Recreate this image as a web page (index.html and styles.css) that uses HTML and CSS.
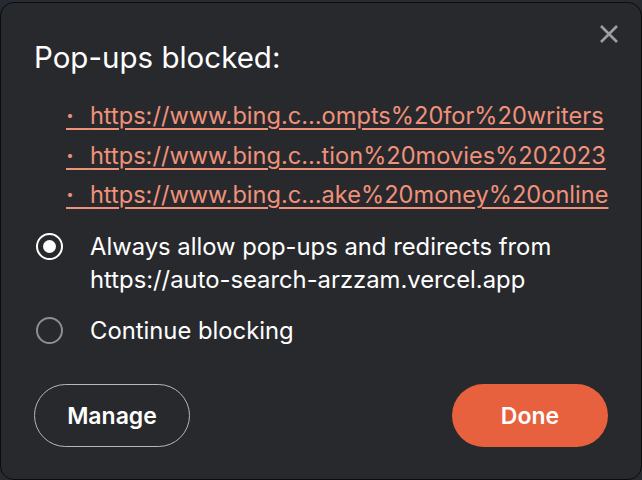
FILE: index.html
```html
<!DOCTYPE html>
<html>
<head>
<meta charset="utf-8">
<link rel="stylesheet" href="styles.css">
</head>
<body>
<div class="dialog">
  <button class="close" aria-label="Close">
    <svg width="20" height="20" viewBox="0 0 20 20"><path d="M2 2 L18 18 M18 2 L2 18" stroke="#9aa0a6" stroke-width="2.6" stroke-linecap="butt"/></svg>
  </button>
  <h1 class="title">Pop-ups blocked:</h1>
  <ul class="links">
    <li><a href="#"><span class="dot">·</span>https://www.bing.c…ompts%20for%20writers</a></li>
    <li><a href="#"><span class="dot">·</span>https://www.bing.c…tion%20movies%202023</a></li>
    <li><a href="#"><span class="dot">·</span>https://www.bing.c…ake%20money%20online</a></li>
  </ul>
  <div class="options">
    <label class="option">
      <span class="radio checked"></span>
      <span class="opt-text">Always allow pop-ups and redirects from https://auto-search-arzzam.vercel.app</span>
    </label>
    <label class="option second">
      <span class="radio"></span>
      <span class="opt-text">Continue blocking</span>
    </label>
  </div>
  <div class="actions">
    <button class="btn outline">Manage</button>
    <button class="btn primary">Done</button>
  </div>
</div>
</body>
</html>
```
FILE: styles.css
```css
html, body {
  margin: 0;
  padding: 0;
  height: 100%;
}
body {
  background: #262a31;
  font-family: Inter, "Noto Sans", "Liberation Sans", sans-serif;
  color: #ffffff;
  padding-top: 2px;
  box-sizing: border-box;
}
.dialog {
  position: relative;
  box-sizing: border-box;
  height: 478px;
  background: #28292d;
  border: 1px solid #0c0c0e;
  border-radius: 14px;
  padding: 38px 33px 32px 33px;
  display: flex;
  flex-direction: column;
}
.close {
  position: absolute;
  top: 21px;
  right: 22px;
  width: 20px;
  height: 20px;
  padding: 0;
  border: 0;
  background: transparent;
  display: flex;
}
.title {
  margin: 0;
  font-size: 29.5px;
  font-weight: 400;
  line-height: 32px;
}
.links {
  list-style: none;
  margin: 23px 0 0 0;
  padding: 0 0 0 32px;
}
.links li {
  height: 39.5px;
  line-height: 39.5px;
  white-space: nowrap;
}
.links a {
  color: #f0917a;
  font-size: 23.6px;
  text-decoration: underline;
  text-decoration-thickness: 1.5px;
  text-underline-offset: 4px;
}
.dot {
  font-weight: 700;
  letter-spacing: 16px;
}
.options {
  margin-top: 15px;
  display: flex;
  flex-direction: column;
  gap: 18px;
}
.option {
  display: flex;
  align-items: flex-start;
}
.opt-text {
  font-size: 23.8px;
  line-height: 33px;
  max-width: 490px;
}
.radio {
  flex: none;
  box-sizing: border-box;
  width: 27px;
  height: 27px;
  margin: 3px 27px 0 2px;
  border-radius: 50%;
  border: 2.5px solid #8c8f93;
  position: relative;
}
.radio.checked {
  border-color: #ffffff;
}
.radio.checked::after {
  content: "";
  position: absolute;
  left: 50%;
  top: 50%;
  width: 13px;
  height: 13px;
  margin: -6.5px 0 0 -6.5px;
  border-radius: 50%;
  background: #ffffff;
}
.actions {
  margin-top: auto;
  display: flex;
  justify-content: space-between;
}
.btn {
  font-family: inherit;
  font-size: 23px;
  font-weight: 600;
  color: #ffffff;
  height: 63px;
  width: 156px;
  border-radius: 32px;
  cursor: pointer;
}
.btn.outline {
  background: transparent;
  border: 1.5px solid #b6b7ba;
}
.btn.primary {
  background: #e8613e;
  border: 0;
}
```
